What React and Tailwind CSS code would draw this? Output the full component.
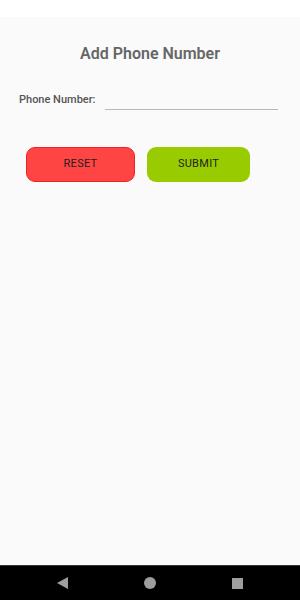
import React from "react";

export default function App() {
  return (
    <div className="w-[300px] h-[600px] flex flex-col bg-[#fafafa]" style={{ fontFamily: "Roboto, 'Liberation Sans', sans-serif" }}>
      <div className="h-[17px] bg-white shrink-0" />
      <div className="flex-1 flex flex-col">
        <h1 className="mt-[26px] text-center text-[16px] leading-[22px] font-semibold text-[#666666]">Add Phone Number</h1>
        <div className="mt-[25px] flex items-end pl-[19px] pr-[22px]">
          <span className="text-[11px] leading-[14px] font-medium text-[#555555] pb-[3px]">Phone Number:</span>
          <div className="ml-[9px] flex-1 h-[20px] border-b-[1.5px] border-[#b8b8b8]" />
        </div>
        <div className="mt-[37px] flex pl-[26px] gap-[12px]">
          <button className="w-[109px] h-[35px] rounded-[9px] bg-[#ff4444] border border-[#ee2222] text-[11px] text-[#222] font-normal tracking-wide">RESET</button>
          <button className="w-[103px] h-[35px] rounded-[9px] bg-[#99cc00] text-[11px] text-[#222] font-normal tracking-wide">SUBMIT</button>
        </div>
      </div>
      <div className="h-[35px] bg-black shrink-0 flex items-center justify-between pl-[57px] pr-[57px] border-t border-[#333]">
        <svg width="11" height="12" viewBox="0 0 11 12"><polygon points="11,0 11,12 0,6" fill="#9e9e9e" /></svg>
        <svg width="12" height="12" viewBox="0 0 12 12"><circle cx="6" cy="6" r="6" fill="#9e9e9e" /></svg>
        <div className="w-[11px] h-[11px] bg-[#9e9e9e]" />
      </div>
    </div>
  );
}
